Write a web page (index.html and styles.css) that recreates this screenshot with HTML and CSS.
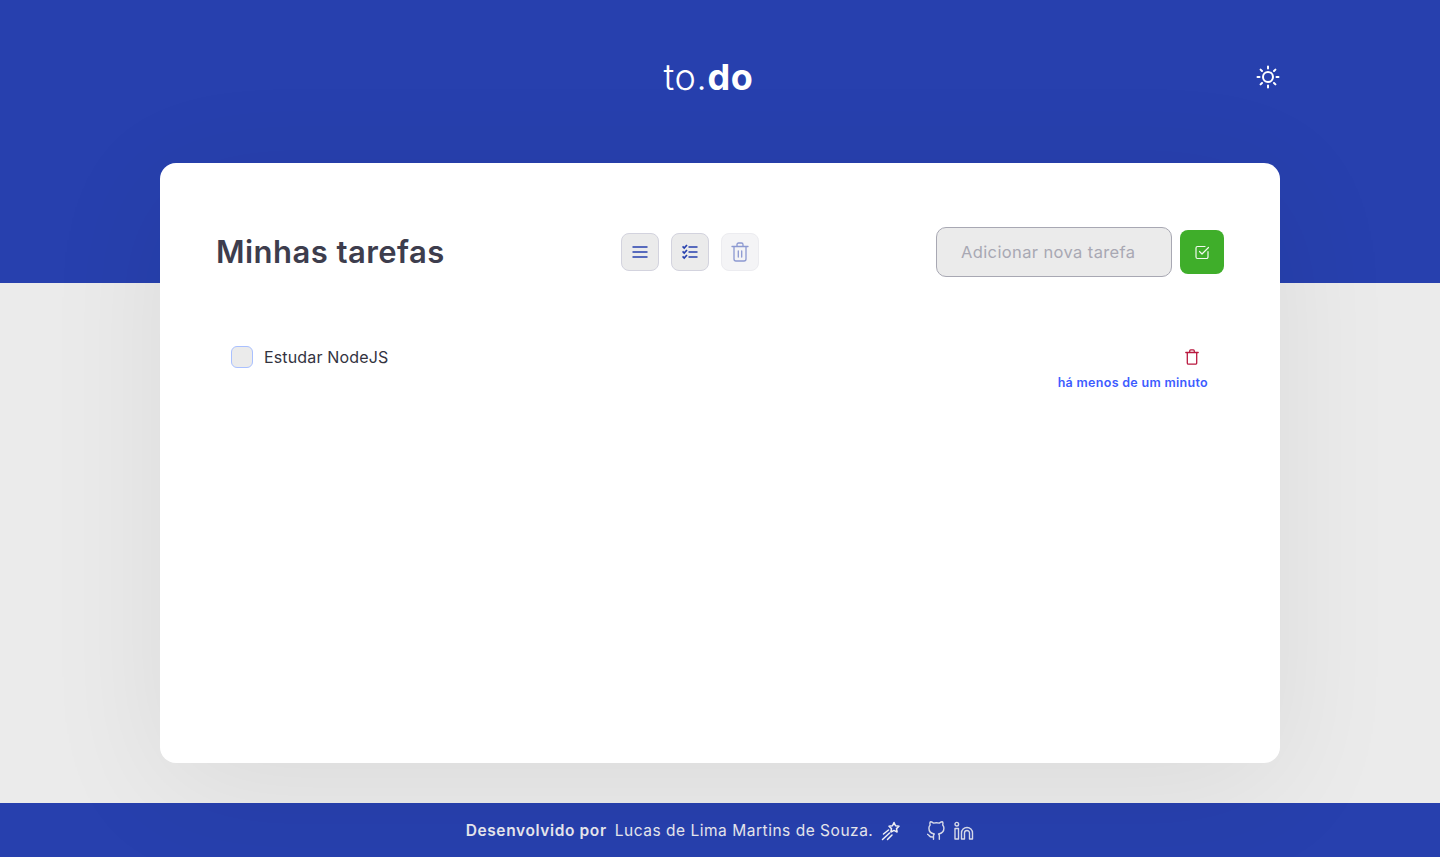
FILE: index.html
```html
<!DOCTYPE html>
<html lang="pt-BR">
<head>
<meta charset="utf-8">
<title>to.do</title>
<link rel="stylesheet" href="styles.css">
</head>
<body>
<div class="page">
  <header class="top">
    <div class="top-inner">
      <h1 class="logo">to.<strong>do</strong></h1>
      <button class="theme" aria-label="Tema">
        <svg width="24" height="24" viewBox="0 0 24 24" fill="none" stroke="#fff" stroke-width="2" stroke-linecap="round"><circle cx="12" cy="12" r="5"/><path d="M12 1.500v2M12 20.500v2M1.500 12h2M20.500 12h2M4.600 4.600 6 6M18 18l1.400 1.400M4.600 19.400 6 18M18 6l1.400-1.400"/></svg>
      </button>
    </div>
  </header>
  <main class="card">
    <div class="card-head">
      <h2 class="title">Minhas tarefas</h2>
      <div class="tools">
        <button class="tool">
          <svg width="16" height="16" viewBox="0 0 16 16" fill="none" stroke="#2740ae" stroke-width="1.700"><path d="M0.500 3h15M0.500 8h15M0.500 13h15"/></svg>
        </button>
        <button class="tool">
          <svg width="16" height="16" viewBox="0 0 16 16" fill="none" stroke="#2740ae" stroke-width="1.700"><path d="M6.500 3h9M6.500 8h9M6.500 13h9"/><path d="M.5 2.400l1.700 1.700L5 1M.5 7.400l1.700 1.700L5 6M.5 12.400l1.700 1.700L5 11"/></svg>
        </button>
        <button class="tool tool-off">
          <svg width="18" height="20" viewBox="0 0 18 20" fill="none" stroke="#2740ae" stroke-width="1.300" stroke-linecap="round" stroke-linejoin="round"><path d="M1 4.500h16M3 4.500V17a2 2 0 0 0 2 2h8a2 2 0 0 0 2-2V4.500M6 4.500V2.500a1.500 1.500 0 0 1 1.500-1.500h3a1.500 1.500 0 0 1 1.500 1.500v2M7.300 9v6M10.700 9v6"/></svg>
        </button>
      </div>
      <form class="add">
        <input class="add-input" type="text" placeholder="Adicionar nova tarefa">
        <button class="add-btn" type="button" aria-label="Adicionar">
          <svg width="16" height="16" viewBox="0 0 16 16" fill="none" stroke="#f2f9f0" stroke-width="1.200" stroke-linecap="round" stroke-linejoin="round"><path d="M14 7.500V13a1.500 1.500 0 0 1-1.500 1.500h-9A1.500 1.500 0 0 1 2 13V4a1.500 1.500 0 0 1 1.500-1.500H11"/><path d="M5.500 7.500 8 10l6.500-6.500"/></svg>
        </button>
      </form>
    </div>
    <ul class="list">
      <li class="task">
        <label class="task-label"><span class="check"></span><span class="task-text">Estudar NodeJS</span></label>
        <div class="task-side">
          <button class="del" aria-label="Excluir">
            <svg width="14" height="16" viewBox="0 0 14 16" fill="none" stroke="#b9193f" stroke-width="1.300" stroke-linecap="round" stroke-linejoin="round"><path d="M.8 3.500h12.400M2.300 3.500V14a1.200 1.200 0 0 0 1.200 1.200h7a1.200 1.200 0 0 0 1.200-1.200V3.500M4.700 3.500V1.900a1 1 0 0 1 1-1h2.600a1 1 0 0 1 1 1v1.600"/></svg>
          </button>
          <span class="time">há menos de um minuto</span>
        </div>
      </li>
    </ul>
  </main>
  <footer class="foot">
    <b class="foot-by">Desenvolvido por</b>
    <span class="foot-name">Lucas de Lima Martins de Souza.</span>
    <svg class="foot-star" width="20" height="20" viewBox="0 0 20 20" fill="none" stroke="#f4f4f8" stroke-width="1.500" stroke-linecap="round" stroke-linejoin="round"><path d="M13 1.500l1.500 3.200 3.500.5-2.500 2.400.6 3.400-3.100-1.600-3.100 1.600.6-3.400L8 5.200l3.500-.5z"/><path d="M7.500 9 2.500 13M8.500 12 1.500 18.500M11 14l-4.500 4.500"/></svg>
    <span class="foot-links">
      <svg width="20" height="20" viewBox="0 0 24 24" fill="none" stroke="#d9dcec" stroke-width="1.700" stroke-linecap="round" stroke-linejoin="round"><path d="M9 19c-5 1.500-5-2.500-7-3m14 6v-3.870a3.370 3.370 0 0 0-.94-2.610c3.140-.35 6.440-1.540 6.440-7A5.440 5.440 0 0 0 20 4.770 5.070 5.070 0 0 0 19.910 1S18.730.65 16 2.480a13.380 13.380 0 0 0-7 0C6.270.65 5.090 1 5.090 1A5.070 5.070 0 0 0 5 4.770a5.440 5.440 0 0 0-1.500 3.780c0 5.420 3.300 6.610 6.440 7A3.370 3.370 0 0 0 9 18.130V22"/></svg>
      <svg width="20" height="20" viewBox="0 0 20 20" fill="none" stroke="#d9dcec" stroke-width="1.400" stroke-linecap="round" stroke-linejoin="round"><circle cx="2.800" cy="3.200" r="1.800"/><path d="M1 7.500h3.500V18H1zM7.500 18V12a5.500 5.500 0 0 1 11 0V18h-3v-6a2.500 2.500 0 0 0-5 0v6z"/></svg>
    </span>
  </footer>
</div>
</body>
</html>
```
FILE: styles.css
```css
* { box-sizing: border-box; }
html, body { margin: 0; height: 100%; }
body { background: #ebebeb; font-family: "Inter", "Open Sans", sans-serif; overflow: hidden; }
button { border: 0; padding: 0; background: none; font: inherit; cursor: pointer; display: flex; align-items: center; justify-content: center; }
.page { min-height: 857px; display: flex; flex-direction: column; }

.top { height: 283px; background: #2740ae; flex: none; }
.top-inner { width: 1120px; margin: 0 auto; padding-top: 54px; height: 100px; display: flex; align-items: center; position: relative; }
.logo { margin: 0 auto; padding-right: 23px; color: #fff; font-size: 36px; font-weight: 300; line-height: 46px; letter-spacing: .7px; }
.logo strong { font-weight: 700; }
.theme { position: absolute; right: 0; top: 65px; width: 24px; height: 24px; }

.card { width: 1120px; height: 600px; margin: -120px auto 0; background: #fff; border-radius: 16px; padding: 64px 56px 0; box-shadow: 0 24px 128px rgba(0,0,0,.07); position: relative; flex: none; }
.card-head { display: flex; align-items: center; height: 50px; }
.title { margin: 0; width: 405px; font-size: 31px; font-weight: 600; color: #3d3d4d; line-height: 50px; letter-spacing: .45px; }
.tools { display: flex; gap: 12px; }
.tool { width: 38px; height: 38px; border-radius: 8px; background: #ebebeb; border: 1px solid #d3d3de; }
.tool-off { background: #f4f4f6; border-color: #ececf0; }
.tool-off svg { opacity: .5; }
.add { margin-left: auto; display: flex; align-items: center; gap: 8px; }
.add-input { width: 236px; height: 50px; border: 1px solid #a8a8b3; border-radius: 10px; background: #ebebeb; padding: 0 24px; font: 400 16.500px "Inter", sans-serif; letter-spacing: .38px; color: #3d3d4d; outline: none; }
.add-input::placeholder { color: #a8a8b3; opacity: 1; }
.add-btn { width: 44px; height: 44px; border-radius: 8px; background: #3fae2a; }

.list { list-style: none; margin: 68px 0 0; padding: 0; }
.task { display: flex; justify-content: space-between; align-items: flex-start; padding: 0 16px 0 15px; }
.task-label { display: flex; align-items: center; gap: 11px; height: 24px; }
.check { width: 22px; height: 22px; border-radius: 6px; background: #ebebeb; border: 1px solid #a9c0ff; }
.task-text { font-size: 16px; color: #33333f; letter-spacing: .15px; }
.task-side { display: flex; flex-direction: column; align-items: flex-end; }
.del { width: 14px; height: 16px; margin: 4px 9px 0 0; }
.time { margin-top: 9px; font-size: 12.500px; font-weight: 600; color: #3d5cff; line-height: 18px; letter-spacing: .3px; }

.foot { margin-top: auto; height: 54px; background: #2740ae; display: flex; align-items: center; justify-content: center; color: #e8e8ee; font-size: 15.500px; padding-top: 1px; flex: none; }
.foot-by { font-weight: 600; letter-spacing: .62px; }
.foot-name { margin-left: 8px; font-weight: 400; letter-spacing: .52px; }
.foot-star { margin-left: 8px; }
.foot-links { display: flex; gap: 8px; margin-left: 25px; }
```
